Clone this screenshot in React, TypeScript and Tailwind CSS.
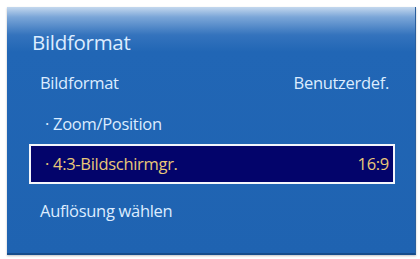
const FONT = "font-['Open_Sans','Noto_Sans',sans-serif]";

function Row({
  label,
  value,
  sub,
  selected,
  className = "",
}: {
  label: string;
  value?: string;
  sub?: boolean;
  selected?: boolean;
  className?: string;
}) {
  return (
    <div
      className={`flex h-[40px] items-center justify-between border-2 pr-[4px] text-[16.5px] tracking-[-0.3px] ${
        sub ? "pl-[14px]" : "pl-[9px]"
      } ${
        selected
          ? "border-[#f4f6fb] bg-[#03046b] text-[#e9c878]"
          : "border-transparent text-[#dcecff]"
      } ${className}`}
    >
      <span>
        {sub ? "· " : ""}
        {label}
      </span>
      {value ? <span>{value}</span> : null}
    </div>
  );
}

export default function App() {
  return (
    <div className={`h-[259px] w-[420px] bg-white pl-[7px] pt-[7px] ${FONT}`}>
      <div className="h-[248px] w-[409px] border-b-2 border-r border-b-[#164c8a] border-r-[#2a5e9c] bg-[linear-gradient(to_bottom,#c4d8ee_0px,#7ba6d8_10px,#3473bd_28px,#2166b5_45px,#1f63b1_100%)] shadow-[0_1px_2px_rgba(0,0,0,0.25)]">
        <div className="pl-[25px] pt-[21px] text-[20.5px] leading-[28px] tracking-[-0.3px] text-[#dcecff]">
          Bildformat
        </div>
        <div className="mt-[7px] pl-[22px] pr-[20px]">
          <Row label="Bildformat" value="Benutzerdef." />
          <Row label="Zoom/Position" sub className="mt-[1px]" />
          <Row label="4:3-Bildschirmgr." value="16:9" sub selected />
          <Row label="Auflösung wählen" className="mt-[7px]" />
        </div>
      </div>
    </div>
  );
}
